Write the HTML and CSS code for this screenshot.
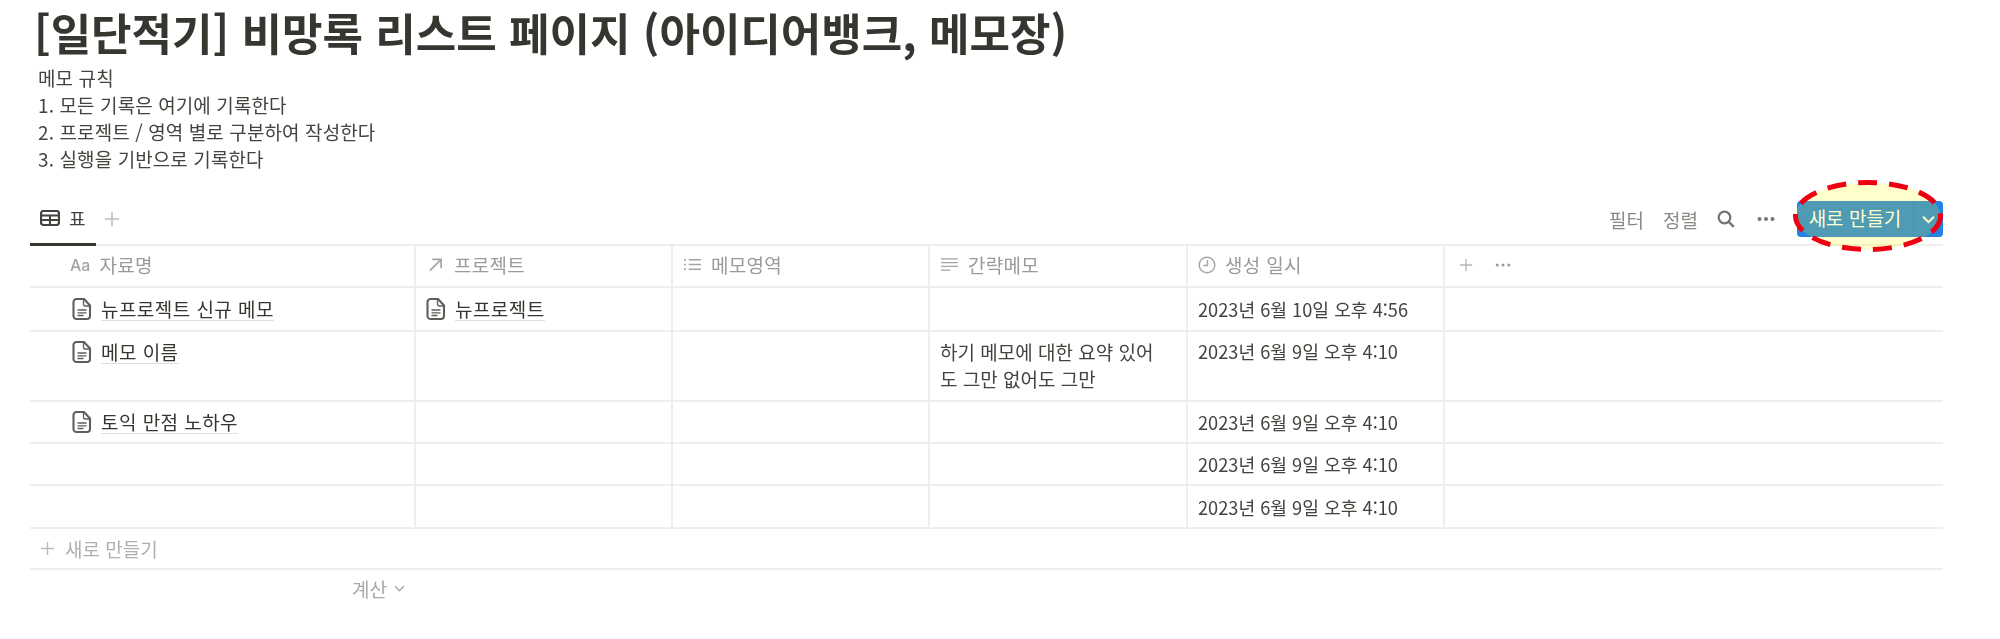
FILE: index.html
```html
<!DOCTYPE html>
<html lang="ko">
<head>
<meta charset="utf-8">
<title>비망록</title>
<link rel="stylesheet" href="styles.css">
</head>
<body>
<svg class="defs" width="0" height="0">
  <defs>
    <symbol id="doc" viewBox="0 0 20 24"><path d="M4.500 2h7.500l6 6.500V19a3 3 0 0 1-3 3H4.500a3 3 0 0 1-3-3V5a3 3 0 0 1 3-3z" fill="none" stroke="currentColor" stroke-width="2.100"/><path d="M11.500 2.500V7a2 2 0 0 0 2 2h4.500M5.500 13h9M5.500 15.800h9M5.500 18.500h6" fill="none" stroke="currentColor" stroke-width="1.300"/></symbol>
    <symbol id="plus" viewBox="0 0 16 16"><path d="M8 1v14M1 8h14" fill="none" stroke="currentColor" stroke-width="1.500"/></symbol>
    <symbol id="chev" viewBox="0 0 12 8"><path d="M1 1.500l5 5 5-5" fill="none" stroke="currentColor" stroke-width="1.800"/></symbol>
  </defs>
</svg>
<main class="page">
  <h1 class="title">[일단적기] 비망록 리스트 페이지 (아이디어뱅크, 메모장)</h1>
  <div class="rules">
    <p>메모 규칙</p>
    <p>1. 모든 기록은 여기에 기록한다</p>
    <p>2. 프로젝트 / 영역 별로 구분하여 작성한다</p>
    <p>3. 실행을 기반으로 기록한다</p>
  </div>

  <div class="toolbar">
    <div class="tabs">
      <div class="tab">
        <svg class="tab-icon" viewBox="0 0 20 16"><rect x="1" y="1" width="18" height="14" rx="2.500" fill="none" stroke="currentColor" stroke-width="2.200"/><path d="M1 5.500h18M1 10h18M10 5.500V15" fill="none" stroke="currentColor" stroke-width="2"/></svg>
        <span>표</span>
      </div>
      <svg class="tab-plus"><use href="#plus"/></svg>
    </div>
    <div class="actions">
      <span class="action">필터</span>
      <span class="action">정렬</span>
      <svg class="search" viewBox="0 0 18 18"><circle cx="7.500" cy="7.500" r="5.800" fill="none" stroke="currentColor" stroke-width="2.200"/><path d="M11.800 11.800l5 5" fill="none" stroke="currentColor" stroke-width="2.400"/></svg>
      <svg class="more" viewBox="0 0 18 4"><circle cx="2.500" cy="2" r="2"/><circle cx="9" cy="2" r="2"/><circle cx="15.500" cy="2" r="2"/></svg>
      <div class="new-wrap">
        <div class="new-btn">
          <span class="new-label">새로 만들기</span>
          <span class="new-arrow"><svg class="chev-white"><use href="#chev"/></svg></span>
        </div>
        <svg class="oval" viewBox="0 0 150 72"><ellipse cx="75" cy="36" rx="72.500" ry="33.500" fill="#ffff00" fill-opacity="0.2" stroke="#ee0011" stroke-width="5" stroke-dasharray="19 12"/></svg>
      </div>
    </div>
  </div>

  <div class="table">
    <div class="row head">
      <div class="cell first"><span class="aa">Aa</span><span>자료명</span></div>
      <div class="cell"><svg class="h-icon" viewBox="0 0 16 16"><path d="M2 14.500L14 2.500M4.500 2.500H14V12" fill="none" stroke="currentColor" stroke-width="1.800"/></svg><span>프로젝트</span></div>
      <div class="cell"><svg class="h-icon" viewBox="0 0 20 16"><path d="M6 3h13M6 8h13M6 13h13" fill="none" stroke="currentColor" stroke-width="1.500"/><path d="M1 3h2M1 8h2M1 13h2" fill="none" stroke="currentColor" stroke-width="1.800"/></svg><span>메모영역</span></div>
      <div class="cell"><svg class="h-icon" viewBox="0 0 20 16"><path d="M1 2h18M1 6h18M1 10h18M1 14h10" fill="none" stroke="currentColor" stroke-width="1.400"/></svg><span>간략메모</span></div>
      <div class="cell"><svg class="h-icon clock" viewBox="0 0 18 18"><circle cx="9" cy="9" r="7.800" fill="none" stroke="currentColor" stroke-width="1.400"/><path d="M9.500 4v5.500H5.500" fill="none" stroke="currentColor" stroke-width="1.400"/></svg><span>생성 일시</span></div>
      <div class="cell last-head">
        <svg class="head-plus"><use href="#plus"/></svg>
        <svg class="head-more" viewBox="0 0 18 4"><circle cx="2.500" cy="2" r="1.700"/><circle cx="9" cy="2" r="1.700"/><circle cx="15.500" cy="2" r="1.700"/></svg>
      </div>
    </div>

    <div class="row r44">
      <div class="cell first page-cell"><svg class="doc"><use href="#doc"/></svg><span class="link">뉴프로젝트 신규 메모</span></div>
      <div class="cell"><svg class="doc"><use href="#doc"/></svg><span class="link">뉴프로젝트</span></div>
      <div class="cell"></div>
      <div class="cell"></div>
      <div class="cell date">2023년 6월 10일 오후 4:56</div>
      <div class="cell"></div>
    </div>

    <div class="row r70">
      <div class="cell first page-cell"><svg class="doc"><use href="#doc"/></svg><span class="link">메모 이름</span></div>
      <div class="cell"></div>
      <div class="cell"></div>
      <div class="cell note">하기 메모에 대한 요약 있어도 그만 없어도 그만</div>
      <div class="cell date">2023년 6월 9일 오후 4:10</div>
      <div class="cell"></div>
    </div>

    <div class="row r42">
      <div class="cell first page-cell"><svg class="doc"><use href="#doc"/></svg><span class="link">토익 만점 노하우</span></div>
      <div class="cell"></div>
      <div class="cell"></div>
      <div class="cell"></div>
      <div class="cell date">2023년 6월 9일 오후 4:10</div>
      <div class="cell"></div>
    </div>

    <div class="row r42">
      <div class="cell first"></div>
      <div class="cell"></div>
      <div class="cell"></div>
      <div class="cell"></div>
      <div class="cell date">2023년 6월 9일 오후 4:10</div>
      <div class="cell"></div>
    </div>

    <div class="row r43">
      <div class="cell first"></div>
      <div class="cell"></div>
      <div class="cell"></div>
      <div class="cell"></div>
      <div class="cell date">2023년 6월 9일 오후 4:10</div>
      <div class="cell"></div>
    </div>

    <div class="add-row"><svg class="add-plus"><use href="#plus"/></svg><span>새로 만들기</span></div>
    <div class="calc"><span>계산</span><svg class="calc-chev"><use href="#chev"/></svg></div>
  </div>
</main>
</body>
</html>
```

FILE: styles.css
```css
* { box-sizing: border-box; }
html, body { margin: 0; padding: 0; background: #fff; }
body {
  width: 2000px;
  height: 639px;
  overflow: hidden;
  font-family: "Noto Sans CJK KR", "Noto Sans", sans-serif;
  color: #45433e;
}
.defs { position: absolute; }
.page { padding: 0 57px 0 30px; filter: blur(.3px); }

.title {
  margin: 0;
  padding-left: 4px;
  height: 64px;
  font-size: 44px;
  line-height: 64px;
  font-weight: 700;
  white-space: nowrap;
  color: #37352f;
}
.rules { padding: 0 0 0 8px; font-size: 19px; letter-spacing: .1px; height: 110px; }
.rules p { margin: 0; height: 27px; line-height: 27px; }

.toolbar {
  height: 70px;
  display: flex;
  justify-content: space-between;
}
.tabs { display: flex; align-items: center; padding-top: 20px; }
.tab {
  width: 56px;
  height: 50px;
  margin-top: -20px;
  padding: 20px 0 0 10px;
  box-sizing: content-box;
  display: flex;
  gap: 9px;
  align-items: center;
  border-bottom: 3px solid #37352f;
  font-size: 18px;
}
.tab-icon { width: 20px; height: 16px; color: #45433e; }
.tab-plus { width: 16px; height: 16px; margin-left: 8px; color: #bcbbb8; }
.actions { display: flex; align-items: center; padding-top: 20px; color: #8a8984; font-size: 19px; }
.action { margin-right: 19px; }
.search { width: 18px; height: 18px; margin-right: 22px; color: #77756f; }
.more { width: 18px; height: 4px; margin-right: 22px; fill: #77756f; }

.new-wrap { position: relative; }
.new-btn {
  width: 146px;
  height: 36px;
  display: flex;
  background: #2383e2;
  border-radius: 4px;
  color: #fff;
  font-size: 19px;
}
.new-label { width: 116px; line-height: 34px; text-align: center; }
.new-arrow {
  flex: 1;
  display: flex;
  align-items: center;
  justify-content: center;
  border-left: 1px solid rgba(55, 53, 47, .2);
}
.chev-white { width: 13px; height: 9px; }
.oval {
  position: absolute;
  left: -4px;
  top: -21px;
  width: 150px;
  height: 72px;
}

.table { border-top: 2px solid #eeeeed; }
.row {
  display: grid;
  grid-template-columns: 384px 257px 257px 258px 257px 500px;
  border-bottom: 2px solid #eeeeed;
  font-size: 19px;
}
.head { height: 42px; color: #9b9a97; letter-spacing: .3px; }
.r44 { height: 44px; }
.r70 { height: 70px; }
.r42 { height: 42px; }
.r43 { height: 43px; }
.cell {
  border-left: 2px solid #eeeeed;
  padding: 0 10px;
  display: flex;
  align-items: center;
  gap: 9px;
}
.cell.first { border-left: 0; padding-left: 40px; }
.cell.page-cell { padding-left: 42px; }
.head .cell { padding-bottom: 3px; }
.aa { font-size: 16px; font-family: "Inter", sans-serif; font-weight: 500; color: #a5a4a0; letter-spacing: 0; }
.h-icon { width: 19px; height: 15px; color: #a5a4a0; flex: none; }
.h-icon.clock { width: 18px; height: 18px; }
.doc { width: 20px; height: 24px; flex: none; color: #5f5e5a; }
.link { border-bottom: 1.500px solid #dfdfde; line-height: 23px; letter-spacing: .45px; color: #37352f; }
.date { font-size: 18.200px; }
.note { align-items: flex-start; padding: 6px 20px 0 10px; line-height: 27px; }
.r70 .date { align-items: flex-start; padding-top: 6px; line-height: 27px; }
.r70 .first { align-items: flex-start; padding-top: 8px; }
.last-head { gap: 22px; padding-left: 14px; }
.head-plus { width: 14px; height: 14px; color: #b8b7b4; }
.head-more { width: 16px; height: 4px; fill: #9b9a97; }

.add-row {
  height: 41px;
  padding-left: 10px;
  display: flex;
  align-items: center;
  gap: 10px;
  color: #b0afac;
  font-size: 19px;
  border-bottom: 2px solid #eeeeed;
}
.add-plus { width: 15px; height: 15px; color: #bcbbb8; }
.calc {
  width: 375px;
  height: 36px;
  display: flex;
  align-items: center;
  justify-content: flex-end;
  gap: 7px;
  color: #aaa9a6;
  font-size: 19px;
}
.calc-chev { width: 11px; height: 7px; }
```
